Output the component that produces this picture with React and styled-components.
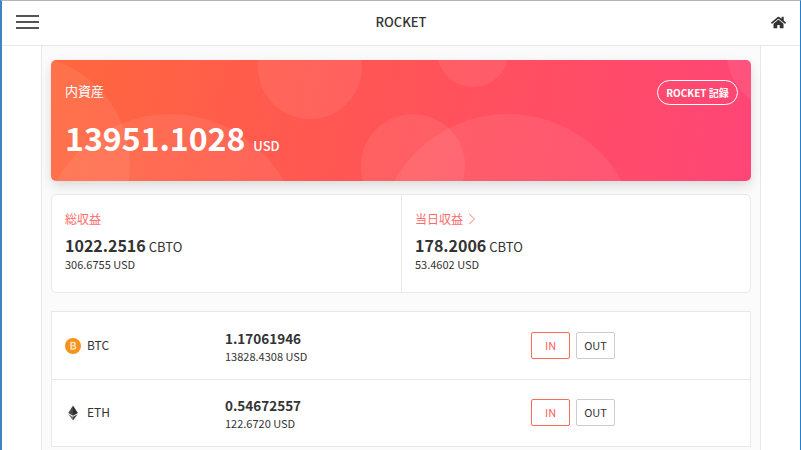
import React from "react";
import styled, { createGlobalStyle } from "styled-components";
import { FaHome } from "react-icons/fa";

const Global = createGlobalStyle`
  html, body { margin: 0; padding: 0; background: #fff; }
  body { font-family: "Noto Sans CJK JP", "Noto Sans", sans-serif; color: #333; }
  * { box-sizing: border-box; }
`;
const Frame = styled.div`
  width: 801px; height: 450px; overflow: hidden; display: flex; flex-direction: column;
  border-top: 1px solid #b4b4b4; border-left: 2px solid #3d85c0; border-right: 1px solid #1e7fd6; background: #fff;
`;
const Header = styled.header`
  height: 45px; flex: none; display: grid; grid-template-columns: 1fr auto 1fr; align-items: center;
  padding: 0 14px 2px 14px; border-bottom: 1px solid #e8e8e8; background: #fff;
`;
const Burger = styled.div`
  width: 23px; display: flex; flex-direction: column; gap: 4px;
  span { display: block; height: 2px; background: #555; }
`;
const Title = styled.h1`margin: 0; font-size: 13px; font-weight: 500; color: #333; line-height: 20px;`;
const Home = styled(FaHome)`width: 15px; height: 15px; color: #333; display: block; justify-self: end;`;
const Column = styled.main`
  width: 720px; margin: 0 auto 0 39px; flex: 1; background: #fbfbfb;
  border-left: 1px solid #e8e8e8; border-right: 1px solid #e8e8e8; padding: 14px 9px 0;
`;
const Hero = styled.section`
  position: relative; height: 121px; border-radius: 5px; overflow: hidden; color: #fff;
  background: linear-gradient(100deg, #ff683d 0%, #ff5555 45%, #ff4577 100%);
  padding: 18px 13px 0 14px;
`;
const HeroShadow = styled.div`border-radius: 5px; box-shadow: 0 5px 12px rgba(0,0,0,.13);`;
const Circle = styled.i`
  position: absolute; border-radius: 50%; background: rgba(255,255,255,.07);
  left: ${p => p.$x - p.$r - 51}px; top: ${p => p.$y - p.$r - 60}px;
  width: ${p => p.$r * 2}px; height: ${p => p.$r * 2}px;
`;
const HeroTop = styled.div`position: relative; display: flex; justify-content: space-between; align-items: flex-start; height: 27px;`;
const HeroLabel = styled.span`font-size: 13px; line-height: 26px;`;
const Pill = styled.button`
  margin-top: 2px; height: 25px; width: 81px; border: 1px solid #fff; border-radius: 13px; background: transparent; padding: 0;
  color: #fff; font: 700 10px/22px "Noto Sans CJK JP", sans-serif; white-space: nowrap;
`;
const HeroValue = styled.div`position: relative; margin-top: 7px; display: flex; align-items: baseline; gap: 8px;`;
const Big = styled.strong`font-size: 32px; font-weight: 700; line-height: 50px;`;
const Unit = styled.span`font-size: 13px; font-weight: 500;`;
const Stats = styled.section`
  margin-top: 13px; height: 99px; display: grid; grid-template-columns: 349px 1fr;
  background: #fff; border: 1px solid #e8e8e8; border-radius: 5px;
`;
const Stat = styled.div`
  padding: 15px 13px; & + & { border-left: 1px solid #e8e8e8; }
`;
const StatLabel = styled.div`
  font-size: 12px; line-height: 18px; color: #ff6b6b; display: flex; align-items: center; gap: 5px;
`;
const Main = styled.div`margin-top: 7px; line-height: 21px; display: flex; align-items: baseline; gap: 3px;`;
const Strong = styled.strong`font-size: 16px; font-weight: 700; color: #333;`;
const Coin = styled.span`font-size: 13px; color: #333;`;
const Sub = styled.div`font-size: 11px; line-height: 15px; color: #333;`;
const List = styled.section`margin-top: 18px; background: #fff; border: 1px solid #e8e8e8;`;
const Row = styled.div`
  height: 67px; display: flex; align-items: center; padding-left: 13px;
  & + & { border-top: 1px solid #e8e8e8; padding-bottom: 1px; }
`;
const Name = styled.div`width: 160px; display: flex; align-items: center; gap: 6px; font-size: 12px; line-height: 16px; color: #333;`;
const Symbol = styled.span`margin-top: -2px;`;
const Amount = styled.div`width: 306px;`;
const Qty = styled.div`font-size: 13.5px; font-weight: 700; line-height: 20px; color: #333;`;
const Fiat = styled.div`font-size: 11px; line-height: 16px; color: #333;`;
const Actions = styled.div`display: flex; gap: 6px;`;
const Btn = styled.button`
  width: 39px; height: 27px; border-radius: 2px; background: #fff; padding: 0;
  border: 1px solid ${p => (p.$primary ? "#ff6a55" : "#ccc")};
  color: ${p => (p.$primary ? "#ff5a5a" : "#333")};
  font: 400 11px/1 "Noto Sans CJK JP", sans-serif;
`;

const BtcIcon = () => (
  <svg width="16" height="16" viewBox="0 0 16 16" aria-hidden="true">
    <circle cx="8" cy="8" r="8" fill="#f7931a" />
    <path d="M5.2 3.8h3.4c1.4 0 2.3.7 2.3 1.9 0 .8-.5 1.4-1.2 1.7 1 .2 1.6.9 1.6 1.9 0 1.3-1 2.4-2.6 2.4H5.2zm1.7 1.4v1.7h1.2c.7 0 1.1-.3 1.1-.9s-.4-.8-1.1-.8zm0 3.1v1.9h1.5c.7 0 1.2-.4 1.2-1s-.5-.9-1.2-.9z" fill="#ffe3bd" />
  </svg>
);
const EthIcon = () => (
  <svg width="16" height="16" viewBox="0 0 16 16" aria-hidden="true">
    <path d="M8 .5 3.2 8 8 10.7z" fill="#4a4a4a" />
    <path d="M8 .5V10.7L12.8 8z" fill="#2c2c2c" />
    <path d="M3.2 9 8 15.5V11.8z" fill="#777" />
    <path d="M12.8 9 8 15.5V11.8z" fill="#444" />
  </svg>
);
const Chevron = () => (
  <svg width="8" height="12" viewBox="0 0 8 12" aria-hidden="true">
    <path d="M1.2 1 6.5 6l-5.3 5" fill="none" stroke="#ff7b7b" strokeWidth="1" />
  </svg>
);

const circles = [[20,165,110],[170,244,130],[310,67,52],[473,51,36],[413,166,52],[508,244,130],[794,48,68]];

export default function App() {
  return (
    <Frame>
      <Global />
      <Header>
        <Burger><span /><span /><span /></Burger>
        <Title>ROCKET</Title>
        <Home />
      </Header>
      <Column>
        <HeroShadow>
          <Hero>
            {circles.map(([x, y, r]) => <Circle key={`${x}-${y}`} $x={x} $y={y} $r={r} />)}
            <HeroTop>
              <HeroLabel>内資産</HeroLabel>
              <Pill>ROCKET 記録</Pill>
            </HeroTop>
            <HeroValue><Big>13951.1028</Big><Unit>USD</Unit></HeroValue>
          </Hero>
        </HeroShadow>
        <Stats>
          <Stat>
            <StatLabel>総収益</StatLabel>
            <Main><Strong>1022.2516</Strong><Coin>CBTO</Coin></Main>
            <Sub>306.6755 USD</Sub>
          </Stat>
          <Stat>
            <StatLabel>当日収益 <Chevron /></StatLabel>
            <Main><Strong>178.2006</Strong><Coin>CBTO</Coin></Main>
            <Sub>53.4602 USD</Sub>
          </Stat>
        </Stats>
        <List>
          <Row>
            <Name><BtcIcon /><Symbol>BTC</Symbol></Name>
            <Amount><Qty>1.17061946</Qty><Fiat>13828.4308 USD</Fiat></Amount>
            <Actions><Btn $primary>IN</Btn><Btn>OUT</Btn></Actions>
          </Row>
          <Row>
            <Name><EthIcon /><Symbol>ETH</Symbol></Name>
            <Amount><Qty>0.54672557</Qty><Fiat>122.6720 USD</Fiat></Amount>
            <Actions><Btn $primary>IN</Btn><Btn>OUT</Btn></Actions>
          </Row>
        </List>
      </Column>
    </Frame>
  );
}
